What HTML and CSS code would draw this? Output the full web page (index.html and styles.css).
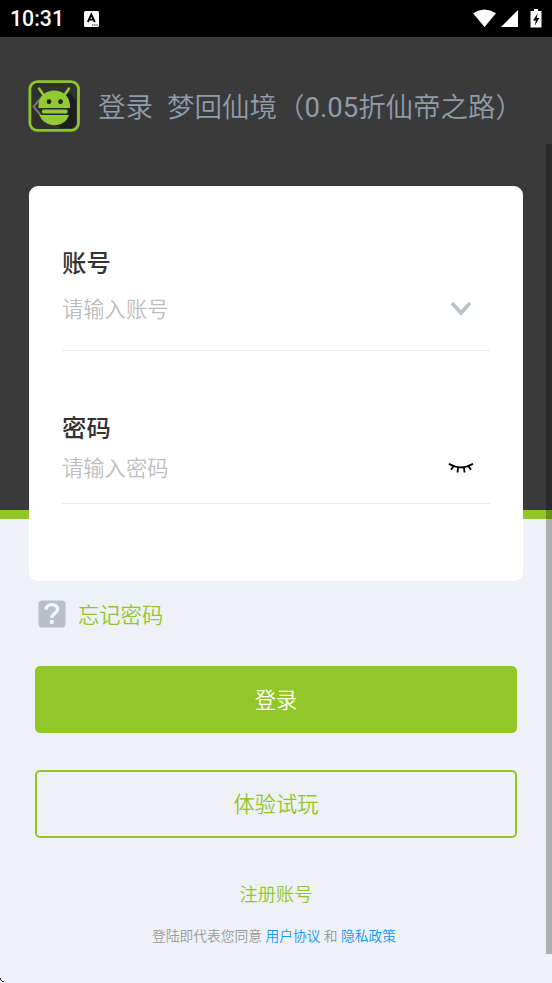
FILE: index.html
```html
<!DOCTYPE html>
<html lang="zh-CN">
<head>
<meta charset="utf-8">
<title>登录</title>
<link rel="stylesheet" href="styles.css">
</head>
<body>
<div class="screen">
  <header class="status">
    <span class="clock">10:31</span>
    <svg class="ime" width="15" height="16" viewBox="0 0 15 16"><rect width="15" height="16" rx="1.5" fill="#fff"/><path d="M3.8 11 7.3 3.5 10.8 11M5.2 8.6h4.2" fill="none" stroke="#000" stroke-width="1.8"/><path d="M8 14h1.3M10.2 14h1.3M12.4 14h1.3" stroke="#000" stroke-width="1.2"/></svg>
    <svg class="signals" width="70" height="20" viewBox="0 0 70 20"><g fill="#fff"><path d="M0 4.2Q11.5-3 23 4.2L11.5 18Z"/><path d="M28 18 45 1V18Z"/><path d="M61 0h4v2h3.5v16.5h-11V2H61z"/></g><path d="M64.6 4.5 60 11.5h2.8l-.9 5 4.6-7.4h-2.8z" fill="#000"/></svg>
  </header>
  <main class="stage">
    <div class="heading">
      <svg class="logo" width="52" height="52" viewBox="0 0 52 52">
        <rect x="1.9" y="1.6" width="48.6" height="48.8" rx="7.5" fill="#303030" stroke="#8ec52b" stroke-width="2.8"/>
        <path d="M41 12 48 21v21q0 6-6 6H34L17 40Z" fill="#1d1d1d"/>
        <path d="M14 17 5.500 26.500 15 38" fill="none" stroke="#777" stroke-width="2"/>
        <g fill="#94c932"><path d="M10.500 28V25C11.500 5.500 41 5.500 42 25v3z"/><path d="M11.500 35h29.500C37 48.500 16 48.500 11.500 35z"/></g>
        <rect x="12.500" y="28" width="28" height="7" rx="2.500" fill="#2b2b2b"/><rect x="14" y="29.500" width="25.500" height="4" rx="1.500" fill="#94c932"/>
        <path d="M11 8.500 15.500 15M41 8.500 36.500 15" stroke="#94c932" stroke-width="2.6" stroke-linecap="round"/>
        <circle cx="21" cy="21.700" r="2.400" fill="#222"/><circle cx="32.500" cy="21.700" r="2.400" fill="#222"/>
      </svg>
      <h1>登录</h1>
      <span class="game">梦回仙境（<span class="number">0.05</span>折仙帝之路）</span>
    </div>
    <section class="card">
      <div class="field account">
        <label>账号</label>
        <div class="entry"><span>请输入账号</span>
          <svg width="22" height="16" viewBox="0 0 22 16"><path d="M2 1 11 11 20 1" fill="none" stroke="#b9bfc6" stroke-width="3.6"/></svg>
        </div>
      </div>
      <div class="field password">
        <label>密码</label>
        <div class="entry"><span>请输入密码</span>
          <svg width="26" height="12" viewBox="0 0 26 12"><path d="M.8.8Q13 8 25 .8M5.500 3.300 3 6.800M10 5 9.500 9.500M16 5 16.500 9.500M20.500 3.300 23 6.800" fill="none" stroke="#000" stroke-width="1.8"/></svg>
        </div>
      </div>
    </section>
    <div class="forgot">
      <svg width="28" height="28" viewBox="0 0 28 28"><rect x=".5" y=".5" width="27" height="27" rx="3.5" fill="#b9bfc6"/><path d="M8 9.7C8 3 20 3 19.500 9.500 19.200 13.500 13.800 13.500 13.800 18" fill="none" stroke="#f4f5f7" stroke-width="3.4"/><rect x="11.8" y="20" width="4" height="4" rx="1" fill="#f4f5f7"/></svg>
      <span>忘记密码</span>
    </div>
    <div class="button primary">登录</div>
    <div class="button outline">体验试玩</div>
    <div class="register">注册账号</div>
    <p class="terms">登陆即代表您同意 <a>用户协议</a> 和 <a>隐私政策</a></p>
  </main>
  <div class="scrollbar"></div>
  <svg class="corner" width="4" height="5" viewBox="0 0 4 5"><path d="M0 0h1v2H0zM1 2h1v1H1zM2 3h2v1H2z" fill="#333"/></svg>
</div>
</body>
</html>
```
FILE: styles.css
```css
* { box-sizing: border-box; }
body { margin: 0; font-family: Roboto, "Noto Sans CJK SC", sans-serif; font-weight: 350; }
svg { display: block; flex: none; }
.screen { position: relative; width: 552px; height: 983px; overflow: hidden; }
.status { display: flex; align-items: center; height: 37px; padding: 0 9px 0 10px; background: #000; color: #fff; }
.clock { width: 74px; font-size: 21.3px; font-weight: 500; line-height: 36px; }
.signals { margin-left: auto; }
.stage { height: 946px; padding: 43px 29px 0; background: linear-gradient(#3a3a3a 473px, #91c728 473px 482px, #f0f1f6 482px); }
.heading { display: flex; align-items: center; height: 52px; margin-left: -1px; color: #929ba8; font-size: 27.5px; line-height: 52px; white-space: nowrap; }
.heading h1 { margin: 0 14px 0 18px; padding-top: 4px; font-size: inherit; font-weight: inherit; }
.game { padding-top: 4px; }
.number { font-weight: 400; }
.card { height: 395px; margin-top: 54px; padding: 61px 33px 0; border-radius: 9px; background: #fff; }
.field { border-bottom: 1px solid #ebebeb; }
.field label { display: block; height: 34px; line-height: 34px; font-size: 24.4px; font-weight: 500; color: #333; }
.entry { display: flex; align-items: center; justify-content: space-between; height: 26px; font-size: 21.3px; line-height: 26px; color: #bdbdbd; }
.account { height: 104px; }
.account .entry { margin-top: 16px; padding-right: 18px; }
.password { height: 92px; margin-top: 61px; }
.password .entry { margin-top: 10px; padding-right: 16px; }
.forgot { display: flex; align-items: center; gap: 12px; height: 28px; margin: 19px 0 0 9px; font-size: 21.3px; line-height: 28px; color: #91c728; }
.forgot span { padding-top: 4px; }
.button { height: 68px; margin: 37px 6px 0; border: 2px solid #91c728; border-radius: 5px; font-size: 21.3px; line-height: 66px; text-align: center; color: #91c728; }
.primary { height: 67px; margin-top: 38px; line-height: 65px; background: #91c728; color: #fff; }
.register { height: 28px; margin-top: 43px; font-size: 18.3px; line-height: 28px; text-align: center; color: #91c728; }
.terms { margin: 16px 0 0; font-size: 13.75px; line-height: 22px; text-align: center; color: #999; padding-right: 4px; white-space: nowrap; }
.terms a { color: #1296f5; }
.scrollbar { position: absolute; right: 0; top: 144px; width: 6px; height: 810px; background: rgba(0, 0, 0, .28); }
.corner { position: absolute; left: 0; bottom: 0; }
```
